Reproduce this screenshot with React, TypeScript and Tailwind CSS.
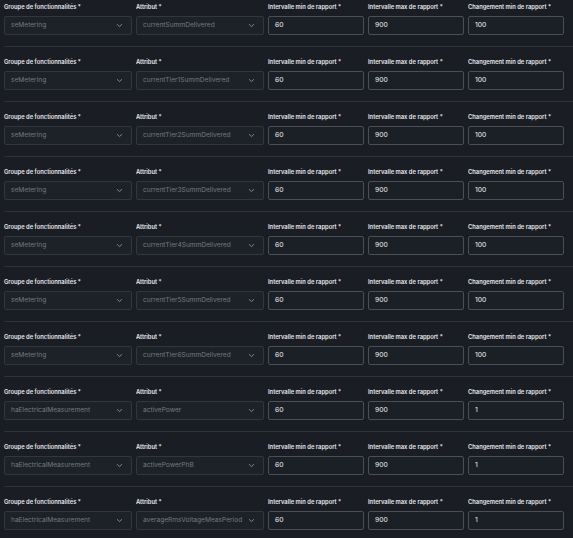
import React from "react";

const rows: [string, string, string][] = [
  ["seMetering", "currentSummDelivered", "100"],
  ["seMetering", "currentTier1SummDelivered", "100"],
  ["seMetering", "currentTier2SummDelivered", "100"],
  ["seMetering", "currentTier3SummDelivered", "100"],
  ["seMetering", "currentTier4SummDelivered", "100"],
  ["seMetering", "currentTier5SummDelivered", "100"],
  ["seMetering", "currentTier6SummDelivered", "100"],
  ["haElectricalMeasurement", "activePower", "1"],
  ["haElectricalMeasurement", "activePowerPhB", "1"],
  ["haElectricalMeasurement", "averageRmsVoltageMeasPeriod", "1"],
];

function Label({ children }: { children: React.ReactNode }) {
  return (
    <div className="h-[8px] leading-[8px] text-[5.8px] font-semibold text-[#e8eaee] whitespace-nowrap">
      {children} *
    </div>
  );
}

function Chevron() {
  return (
    <svg width="7" height="5" viewBox="0 0 7 5" className="shrink-0">
      <path d="M1 1.2 L3.5 3.6 L6 1.2" fill="none" stroke="#8b9098" strokeWidth="0.9" />
    </svg>
  );
}

function SelectBox({ value }: { value: string }) {
  return (
    <div className="h-[19px] rounded-[2px] border border-[#32363d] bg-[#1d2128] flex items-center justify-between pl-[6px] pr-[8px]">
      <span className="text-[6.6px] text-[#757a83] whitespace-nowrap">{value}</span>
      <Chevron />
    </div>
  );
}

function InputBox({ value }: { value: string }) {
  return (
    <div className="h-[19px] rounded-[2px] border border-[#4a4f57] bg-[#1b1f26] flex items-center pl-[6px]">
      <span className="text-[6.8px] text-[#f1f3f6]">{value}</span>
    </div>
  );
}

function Field({ label, children }: { label: string; children: React.ReactNode }) {
  return (
    <div className="flex flex-col gap-[5px]">
      <Label>{label}</Label>
      {children}
    </div>
  );
}

export default function App() {
  return (
    <div
      className="w-[573px] h-[538px] overflow-hidden bg-[#1a1d23] pl-[4px]"
      style={{ fontFamily: "Inter, 'Noto Sans', sans-serif" }}
    >
      <div className="mt-[-8px]">
        {rows.map(([group, attr, change], i) => (
          <div key={i} className="border-b border-[#2e3239] pt-[11px] pb-[11px]">
            <div className="grid w-[560px] grid-cols-[4fr_4fr_3fr_3fr_3fr] gap-[4px]">
              <Field label="Groupe de fonctionnalités">
                <SelectBox value={group} />
              </Field>
              <Field label="Attribut">
                <SelectBox value={attr} />
              </Field>
              <Field label="Intervalle min de rapport">
                <InputBox value="60" />
              </Field>
              <Field label="Intervalle max de rapport">
                <InputBox value="900" />
              </Field>
              <Field label="Changement min de rapport">
                <InputBox value={change} />
              </Field>
            </div>
          </div>
        ))}
      </div>
    </div>
  );
}
